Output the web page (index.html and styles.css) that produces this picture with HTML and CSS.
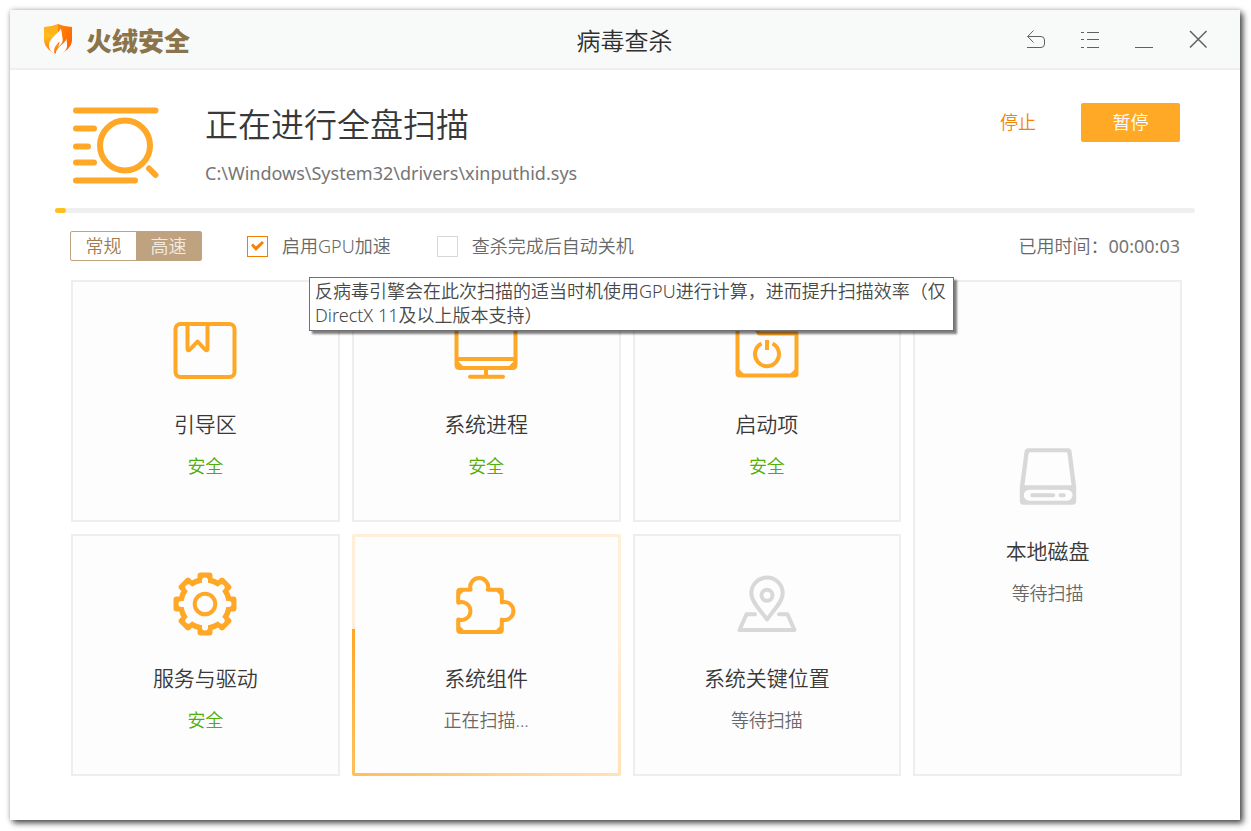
FILE: index.html
```html
<!DOCTYPE html>
<html lang="zh-CN">
<head>
<meta charset="utf-8">
<title>病毒查杀</title>
<link rel="stylesheet" href="styles.css">
</head>
<body>
<div class="window">
  <header class="titlebar">
    <div class="brand">
      <svg class="brand-mark" viewBox="0 0 28 32" aria-hidden="true">
        <defs>
          <linearGradient id="shield-left" x1="0" y1="0" x2="0" y2="1"><stop offset="0" stop-color="#ffa91c"/><stop offset=".4" stop-color="#ffbd1c"/><stop offset="1" stop-color="#ff6a0c"/></linearGradient>
          <linearGradient id="shield-right" x1="0" y1="0" x2="1" y2="1"><stop offset="0" stop-color="#ff8a00"/><stop offset="1" stop-color="#ff5a0a"/></linearGradient>
        </defs>
        <path d="M14 0Q7 3 0 3V17Q1 26 14 31Z" fill="url(#shield-left)"/>
        <path d="M14 0Q21 3 28 3V17Q27 26 14 31Z" fill="url(#shield-right)"/>
        <path d="M16.500 4.500C15 10 4.500 14 5 22C5.300 26 8 28.500 10.500 30C9 24 12 21 15.500 17.500C15.500 20 14.500 21 14 23C17 21 19.500 18 18.500 14C17.800 11 18.500 8 16.500 4.500Z" fill="#fff"/>
        <path d="M22.500 14.500C21.500 20 12 22.500 11.500 30.500L14 32C18 30 22.500 27 23 22.500C23.300 19.500 22.500 17 22.500 14.500Z" fill="#fff"/>
      </svg>
      <span class="brand-name">火绒安全</span>
    </div>
    <h1 class="window-title">病毒查杀</h1>
    <nav class="window-controls">
      <button class="control" type="button" aria-label="返回"><svg viewBox="0 0 18 18"><path d="M6.500 .5L.7 6.500L6.500 12.500M.7 6.500H14Q17.500 6.500 17.500 10V14Q17.500 17.500 14 17.500H0"/></svg></button>
      <button class="control" type="button" aria-label="菜单"><svg viewBox="0 0 18 18"><path d="M0 2.500H3M6 2.500H18M0 9.500H3M6 9.500H18M0 17.500H3M6 17.500H18"/></svg></button>
      <button class="control" type="button" aria-label="最小化"><svg viewBox="0 0 18 18"><path d="M0 17.500H18"/></svg></button>
      <button class="control" type="button" aria-label="关闭"><svg viewBox="0 0 18 18"><path class="cross" d="M1 1L17.500 17.500M17.500 1L1 17.500"/></svg></button>
    </nav>
  </header>

  <main class="content">
    <section class="summary">
      <svg class="summary-icon" viewBox="0 0 86 78" aria-hidden="true">
        <path d="M3 3.500H82.500M3 21.500H21M3 39.500H15M3 55.500H21M3 73.500H62M76 61.500L82.500 68"/>
        <circle cx="52" cy="38.500" r="25"/>
      </svg>
      <div class="summary-text">
        <h2 class="summary-title">正在进行全盘扫描</h2>
        <p class="summary-path">C:\Windows\System32\drivers\xinputhid.sys</p>
      </div>
      <div class="actions">
        <button class="stop" type="button">停止</button>
        <button class="pause" type="button">暂停</button>
      </div>
    </section>

    <div class="progress" role="progressbar" aria-label="扫描进度" aria-valuenow="1" aria-valuemin="0" aria-valuemax="100"><div class="progress-value" style="width:1%"></div></div>

    <section class="options">
      <div class="mode">
        <button class="mode-item" type="button" aria-pressed="false">常规</button>
        <button class="mode-item mode-active" type="button" aria-pressed="true">高速</button>
      </div>
      <div class="option option-gpu">
        <input class="check" type="checkbox" id="gpu" checked aria-describedby="gpu-tip">
        <label for="gpu">启用GPU加速</label>
        <div class="tooltip" id="gpu-tip" role="tooltip">反病毒引擎会在此次扫描的适当时机使用GPU进行计算，进而提升扫描效率（仅<br>DirectX 11及以上版本支持）</div>
      </div>
      <div class="option">
        <input class="check" type="checkbox" id="shutdown">
        <label for="shutdown">查杀完成后自动关机</label>
      </div>
      <p class="elapsed">已用时间：<span class="latin">00:00:03</span></p>
    </section>

    <section class="areas">
      <article class="area">
        <svg class="area-icon" viewBox="0 0 64 64" aria-hidden="true"><rect x="2.500" y="6" width="59" height="53" rx="5"/><path d="M14.500 6V30.500Q14.500 33.500 17 31.500L24.500 23.500L32 31.500Q34.500 33.500 34.500 30.500V6"/></svg>
        <h3 class="area-name">引导区</h3><p class="area-state safe">安全</p>
      </article>
      <article class="area">
        <svg class="area-icon" viewBox="0 0 64 64" aria-hidden="true"><path d="M2.500 6H61.500V47Q61.500 50 58.500 50H5.500Q2.500 50 2.500 47ZM2.500 41H61.500M32 50V58"/><path d="M16 58.800H49"/><path class="solid" d="M4 43L9 48V50H4ZM60 43L55 48V50H60Z"/></svg>
        <h3 class="area-name">系统进程</h3><p class="area-state safe">安全</p>
      </article>
      <article class="area">
        <svg class="area-icon" viewBox="0 0 64 64" aria-hidden="true"><path d="M2.500 7H19L24 15.500H61.500V55.500Q61.500 57.500 59.500 57.500H4.500Q2.500 57.500 2.500 55.500Z"/><path class="solid" d="M4 51L9 56V58H4ZM60 51L55 56V58H60Z"/><path class="butt" d="M26.500 25.500A12 12 0 1 0 37.500 25.500M32 22V32"/></svg>
        <h3 class="area-name">启动项</h3><p class="area-state safe">安全</p>
      </article>
      <article class="area area-tall">
        <svg class="area-icon waiting" viewBox="0 0 64 64" aria-hidden="true"><path class="solid" fill-rule="evenodd" d="M12.500 3.300H52Q55.300 3.300 55.700 7L60.200 42V56Q60.200 59.700 56.500 59.700H7.500Q3.800 59.700 3.800 56V42L8.500 7Q9 3.300 12.500 3.300ZM14 7.300Q12.800 7.300 12.600 8.500L8.500 40.300H55.500L51.400 8.500Q51.200 7.300 50 7.300ZM13.300 44.700A5.500 5.500 0 0 0 13.300 55.700H51A5.500 5.500 0 0 0 51 44.700ZM16.200 48.300H37.200A2 2 0 0 1 37.200 52.300H16.200A2 2 0 0 1 16.200 48.300ZM44.500 48.300H47.800A2 2 0 0 1 47.800 52.300H44.500A2 2 0 0 1 44.500 48.300Z"/></svg>
        <h3 class="area-name">本地磁盘</h3><p class="area-state">等待扫描</p>
      </article>
      <article class="area">
        <svg class="area-icon" viewBox="0 0 64 64" aria-hidden="true">
          <defs><g id="teeth"><rect x="24.500" y=".5" width="15" height="14" rx="3"/><rect x="24.500" y="49.500" width="15" height="14" rx="3"/></g></defs>
          <g class="solid"><circle cx="32" cy="32" r="27"/><use href="#teeth"/><use href="#teeth" transform="rotate(45 32 32)"/><use href="#teeth" transform="rotate(90 32 32)"/><use href="#teeth" transform="rotate(135 32 32)"/></g>
          <circle class="hollow" cx="32" cy="32" r="21.500"/>
          <path class="hollow-line" d="M32 8.500V55.500M8.500 32H55.500M15.400 15.400L48.600 48.600M48.600 15.400L15.400 48.600"/>
          <circle cx="32" cy="32" r="10.300"/>
        </svg>
        <h3 class="area-name">服务与驱动</h3><p class="area-state safe">安全</p>
      </article>
      <article class="area area-scanning">
        <svg class="area-icon" viewBox="0 0 64 64" aria-hidden="true"><path d="M4.200 30.600V19.700Q4.200 17.700 6.200 17.700H16.600A9 9 0 1 1 33.800 17.700H45.800Q47.800 17.700 47.800 19.700V30.400A9 9 0 1 1 47.800 47.600V58Q47.800 60 45.800 60H6.200Q4.200 60 4.200 58V47.400A9 9 0 1 0 4.200 30.600Z"/><path class="solid" d="M5 53L10 58V60H5ZM47 53L42 58V60H47ZM5 24L10 19V17H5ZM47 24L42 19V17H47Z"/></svg>
        <h3 class="area-name">系统组件</h3><p class="area-state">正在扫描...</p>
      </article>
      <article class="area">
        <svg class="area-icon waiting" viewBox="0 0 64 64" aria-hidden="true"><path d="M20 42.300H11.500L4.500 58H59.500L52.500 42.300H44M32 47.500C26 39 16.300 30 16.300 21.300A15.700 15.700 0 0 1 47.700 21.300C47.700 30 38 39 32 47.500Z"/><circle cx="32" cy="23.300" r="5.500"/></svg>
        <h3 class="area-name">系统关键位置</h3><p class="area-state">等待扫描</p>
      </article>
    </section>
  </main>
</div>
</body>
</html>
```
FILE: styles.css
```css
* { box-sizing: border-box; }

body {
  margin: 0;
  padding: 10px 11px 11px 10px;
  background: #fff;
  color: #686868;
  font-family: "Noto Sans", "Noto Sans CJK SC", sans-serif;
  font-size: 18px;
  font-weight: 350;
  line-height: 24px;
}

h1, h2, h3, p { margin: 0; font-weight: inherit; }

button {
  padding: 0;
  border: 0;
  background: none;
  color: inherit;
  font: inherit;
  cursor: pointer;
}

.window {
  display: flex;
  flex-direction: column;
  min-height: calc(100vh - 21px);
  background: #fff;
  box-shadow: 3px 3px 6px rgba(0, 0, 0, .7), 0 0 5px rgba(0, 0, 0, .2);
}

.titlebar {
  display: grid;
  grid-template-columns: 1fr auto 1fr;
  align-items: center;
  height: 60px;
  padding: 0 15px 0 34px;
  border-bottom: 2px solid #eef0ef;
  background: #f8faf9;
}

.brand { display: flex; align-items: center; gap: 14px; padding-top: 2px; }
.brand-mark { width: 28px; height: 32px; }
.brand-name {
  padding-top: 2px;
  color: #8a744c;
  font-size: 26px;
  font-weight: 900;
  line-height: 32px;
}

.window-title {
  margin-right: 20px;
  padding-top: 4px;
  color: #303030;
  font-size: 24px;
  line-height: 32px;
}

.window-controls { display: flex; justify-content: flex-end; }
.control { display: grid; place-items: center; width: 54px; height: 40px; }
.control svg { width: 18px; height: 18px; fill: none; stroke: #606060; stroke-width: 1; }
.control .cross { stroke-width: 1.500; }

.content {
  display: flex;
  flex: 1;
  flex-direction: column;
  padding: 33px 45px 44px;
}

.summary { display: flex; align-items: flex-start; padding: 0 15px 0 18px; }
.summary-icon {
  width: 86px;
  height: 78px;
  margin: 4px 46px 0 0;
  fill: none;
  stroke: #ffa726;
  stroke-width: 6;
  stroke-linecap: round;
}
.summary-text { flex: 1; }
.summary-title { color: #383838; font-size: 33px; line-height: 44px; }
.summary-path { margin-top: 12px; font-weight: 400; line-height: 28px; color: #757575; }

.actions { display: flex; align-items: center; gap: 45px; }
.stop { padding-bottom: 2px; color: #f28500; }
.pause {
  width: 99px;
  height: 39px;
  padding-bottom: 2px;
  border-radius: 2px;
  background: #ffa926;
  color: #fff;
}

.progress { height: 5px; margin-top: 21px; border-radius: 3px; background: #efefef; }
.progress-value { height: 5px; border-radius: 3px; background: #ffbf1c; }

.options {
  display: flex;
  align-items: center;
  margin-top: 18px;
  padding: 0 15px;
}
.mode {
  display: flex;
  width: 132px;
  height: 30px;
  margin-right: 45px;
  border: 1px solid #bfa280;
  border-radius: 2px;
}
.mode-item { flex: 1; color: #a27c4e; }
.mode-active { background: #bfa280; color: #f4ebe0; }

.option { position: relative; display: flex; align-items: center; gap: 14px; }
.option-gpu { margin-right: 46px; }
.check {
  display: grid;
  place-items: center;
  width: 21px;
  height: 21px;
  margin: 0;
  border: 1px solid #d8d8d8;
  background: #fff;
  appearance: none;
}
.check:checked { border-color: #ef7f00; }
.check:checked::before {
  content: "";
  width: 13px;
  height: 10px;
  background: #f58200;
  clip-path: polygon(0 45%, 15% 25%, 38% 55%, 85% 0, 100% 20%, 38% 100%);
}

.tooltip {
  position: absolute;
  z-index: 2;
  top: 43px;
  left: 62px;
  width: 645px;
  padding: 1px 5px 3px;
  border: 1px solid #707070;
  background: #fff;
  color: #484848;
  white-space: nowrap;
  box-shadow: 3px 3px 2px rgba(0, 0, 0, .5);
}

.elapsed { margin-left: auto; }
.latin { font-weight: 400; color: #757575; }

.areas {
  display: grid;
  flex: 1;
  grid-template-columns: repeat(4, 1fr);
  grid-template-rows: 1fr 1fr;
  gap: 12px;
  margin-top: 19px;
  padding: 0 13px 0 16px;
}
.area {
  display: flex;
  flex-direction: column;
  align-items: center;
  justify-content: center;
  padding-bottom: 7px;
  border: 2px solid #eee;
  background: #fdfdfd;
}
.area-tall { grid-row: 1 / 3; grid-column: 4; }
.area-scanning {
  border: 3px solid transparent;
  border-radius: 2px;
  background:
    linear-gradient(#fdfdfd, #fdfdfd) padding-box,
    conic-gradient(from 281deg, #ffeeda 0 165deg, #ffe2b8 210deg, #ffbe5a 310deg, #ffa726 360deg) border-box;
}

.area-icon {
  width: 64px;
  height: 64px;
  fill: none;
  stroke: #ffa726;
  stroke-width: 4;
  stroke-linecap: round;
  stroke-linejoin: round;
}
.area-icon .solid { fill: #ffa726; stroke: none; }
.area-icon .butt { stroke-width: 4; stroke-linecap: butt; }
.area-icon .hollow { fill: #fdfdfd; stroke: none; }
.area-icon .hollow-line { stroke: #fdfdfd; stroke-width: 6; }
.area-icon.waiting { stroke: #d8d8d8; }
.area-icon.waiting .solid { fill: #d8d8d8; }

.area-name { margin-top: 28px; color: #383838; font-size: 21px; line-height: 28px; }
.area-state { margin-top: 16px; }
.safe { color: #4fae08; }
```
